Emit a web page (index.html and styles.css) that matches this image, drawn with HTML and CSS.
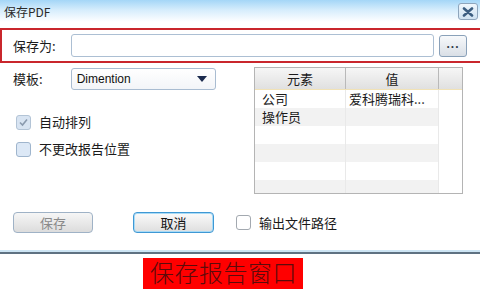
FILE: index.html
```html
<!DOCTYPE html>
<html lang="zh">
<head>
    <meta charset="UTF-8">
    <title>保存PDF</title>
    <link rel="stylesheet" href="styles.css">
</head>
<body>
    <div class="dialog">
        <div class="titlebar">
            <span class="title">保存PDF</span>
            <span class="close-btn">
                <svg width="12" height="10" viewBox="0 0 12 10"><path d="M2 1.5 L10 8.5 M10 1.5 L2 8.5" stroke="#3b5d80" stroke-width="2.6" stroke-linecap="round"/></svg>
            </span>
        </div>

        <!-- file path row -->
        <div class="save-row">
            <label class="field-label">保存为:</label>
            <div class="path-input"></div>
            <button class="browse-btn">...</button>
        </div>

        <div class="content">
            <div class="upper">
                <div class="left-col">
                    <div class="template-row">
                        <label class="field-label">模板:</label>
                        <div class="select">
                            <span>Dimention</span>
                            <svg width="10" height="6" viewBox="0 0 10 6"><path d="M0 0 H10 L5 6 Z" fill="#1b2a4e"/></svg>
                        </div>
                    </div>
                    <div class="check-row first">
                        <span class="checkbox disabled">
                            <svg width="11" height="11" viewBox="0 0 11 11"><path d="M2 5.5 L4.5 8 L9 2.5" fill="none" stroke="#8a9aae" stroke-width="1.6"/></svg>
                        </span>
                        <span>自动排列</span>
                    </div>
                    <div class="check-row">
                        <span class="checkbox tinted"></span>
                        <span>不更改报告位置</span>
                    </div>
                </div>

                <div class="grid">
                    <div class="grid-head">
                        <div class="hcell">元素</div>
                        <div class="hcell">值</div>
                        <div class="hcell last"></div>
                    </div>
                    <div class="grid-row">
                        <div class="cell name">公司</div>
                        <div class="cell">爱科腾瑞科...</div>
                        <div class="cell blank"></div>
                    </div>
                    <div class="grid-row alt">
                        <div class="cell name">操作员</div>
                        <div class="cell"></div>
                        <div class="cell blank"></div>
                    </div>
                    <div class="grid-row">
                        <div class="cell name"></div>
                        <div class="cell"></div>
                        <div class="cell blank"></div>
                    </div>
                    <div class="grid-row alt">
                        <div class="cell name"></div>
                        <div class="cell"></div>
                        <div class="cell blank"></div>
                    </div>
                    <div class="grid-row">
                        <div class="cell name"></div>
                        <div class="cell"></div>
                        <div class="cell blank"></div>
                    </div>
                    <div class="grid-row alt">
                        <div class="cell name"></div>
                        <div class="cell"></div>
                        <div class="cell blank"></div>
                    </div>
                </div>
            </div>

            <div class="actions">
                <button class="btn btn-disabled">保存</button>
                <button class="btn btn-focus">取消</button>
                <div class="check-row inline">
                    <span class="checkbox"></span>
                    <span>输出文件路径</span>
                </div>
            </div>
        </div>
    </div>

    <div class="caption">保存报告窗口</div>
</body>
</html>
```

FILE: styles.css
```css
body {
    margin: 0;
    background: #ffffff;
    font-family: "Noto Sans CJK SC", "Liberation Sans", sans-serif;
    font-size: 13px;
    color: #1a1a1a;
    overflow: hidden;
}

.dialog {
    width: 480px;
    height: 254px;
    border-bottom: 2px solid #5f7282;
    box-shadow: inset 0 -2px 0 #cde5f4;
    box-sizing: border-box;
}

.titlebar {
    height: 28px;
    display: flex;
    align-items: flex-start;
    justify-content: space-between;
    background: linear-gradient(to bottom, #a4d6f7 0, #d6edfc 10px, #ffffff 22px);
}

.title {
    font-size: 12px;
    line-height: 14px;
    margin: 5px 0 0 4px;
    color: #2a2a2a;
}

.close-btn {
    width: 18px;
    height: 15px;
    margin: 3px 2px 0 0;
    border: 1px solid #8ea5bc;
    border-radius: 3px;
    background: linear-gradient(to bottom, #f0f7fd, #cfe2f1);
    display: flex;
    align-items: center;
    justify-content: center;
}

.save-row {
    height: 35px;
    box-sizing: border-box;
    border: 2px solid #c9262c;
    border-right: none;
    display: flex;
    align-items: center;
    padding-left: 11px;
}

.field-label {
    width: 58px;
    line-height: 16px;
}

.path-input {
    width: 361px;
    height: 21px;
    border: 1px solid #acbfd3;
    border-radius: 3px;
    background: #ffffff;
}

.browse-btn {
    width: 28px;
    height: 22px;
    margin-left: 5px;
    padding: 0 0 4px;
    border: 1px solid #8aa1b9;
    border-radius: 3px;
    background: linear-gradient(to bottom, #f7f9fb, #d9dfe6);
    font-family: "Liberation Sans", sans-serif;
    font-size: 12px;
    font-weight: bold;
    color: #333d4a;
    letter-spacing: 1px;
}

.content {
    padding-left: 13px;
}

.upper {
    display: flex;
}

.left-col {
    width: 203px;
}

.template-row {
    display: flex;
    align-items: center;
    margin-top: 5px;
}

.select {
    width: 131px;
    height: 20px;
    border: 1px solid #a9bcd1;
    border-radius: 3px;
    background: linear-gradient(to bottom, #ffffff, #f3f5f8);
    display: flex;
    align-items: center;
    justify-content: space-between;
    padding: 0 8px 0 5px;
    font-family: "Liberation Sans", sans-serif;
    font-size: 12px;
    color: #111;
}

.check-row {
    display: flex;
    align-items: center;
    gap: 8px;
    height: 16px;
    line-height: 16px;
    padding-left: 3px;
    margin-top: 11px;
}

.check-row.first {
    margin-top: 24px;
}

.check-row.inline {
    margin-top: 0;
    padding-left: 0;
}

.checkbox {
    width: 13px;
    height: 13px;
    border: 1px solid #a3a9b0;
    border-radius: 3px;
    background: #ffffff;
    display: flex;
    align-items: center;
    justify-content: center;
}

.checkbox.disabled {
    border-color: #b3c4d6;
    background: #d8e4f2;
}

.checkbox.tinted {
    border-color: #9fb5cd;
    background: #dce8f6;
}

.grid {
    width: 209px;
    height: 127px;
    margin: 4px 0 0 38px;
    border: 1px solid #b4b4b4;
    box-sizing: border-box;
    overflow: hidden;
}

.grid-head {
    display: grid;
    grid-template-columns: 91px 93px 1fr;
    height: 21px;
    background: linear-gradient(to bottom, #f6f6f6, #e0e0e0);
    border-bottom: 1px solid #f1e2b6;
}

.hcell {
    border-right: 1px solid #b9b9b9;
    text-align: center;
    line-height: 21px;
}

.hcell.last {
    border-right: none;
}

.grid-row {
    display: grid;
    grid-template-columns: 91px 93px 1fr;
    height: 18px;
    line-height: 18px;
}

.cell {
    padding-left: 3px;
    border-right: 1px solid #e9e9e9;
    white-space: nowrap;
}

.cell.name {
    padding-left: 7px;
}

.grid-row.alt .cell {
    background: #f2f2f2;
}

.grid-row .cell.blank,
.grid-row.alt .cell.blank {
    background: #ffffff;
    border-right: none;
}

.actions {
    display: flex;
    align-items: center;
    margin-top: 18px;
}

.btn {
    width: 81px;
    height: 21px;
    padding: 0;
    border-radius: 4px;
    font-family: "Noto Sans CJK SC", sans-serif;
    font-size: 13px;
    line-height: 17px;
}

.btn-disabled {
    width: 80px;
    border: 1px solid #9fb2c6;
    background: linear-gradient(to bottom, #f6f6f6, #dcdcdc);
    color: #8a8a8a;
}

.btn-focus {
    margin-left: 40px;
    margin-right: 22px;
    border: 1px solid #3f98d4;
    box-shadow: inset 0 0 0 1px #a9dbf6;
    background: linear-gradient(to bottom, #fbfbfb, #dedede);
    color: #111;
}

.caption {
    width: 160px;
    height: 31px;
    margin: 4px 0 0 143px;
    background: #ff0000;
    color: #5c0b0b;
    font-size: 24px;
    font-weight: 300;
    line-height: 28px;
    padding-left: 7px;
    box-sizing: border-box;
    letter-spacing: 0.5px;
}
```
